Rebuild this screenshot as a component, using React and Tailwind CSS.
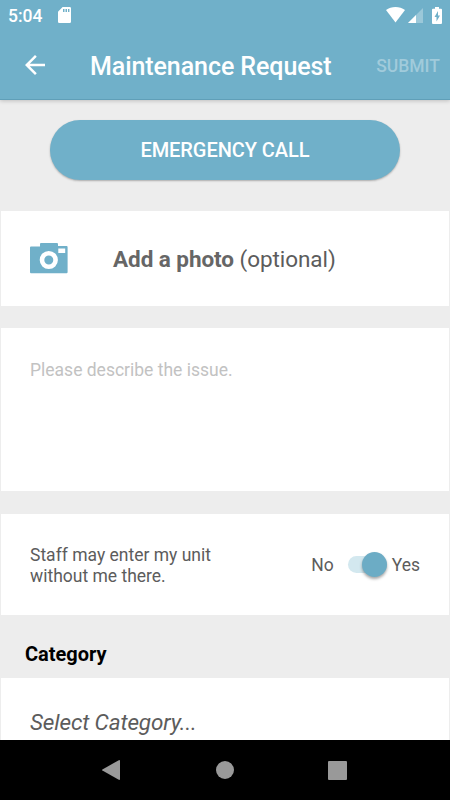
import React, { useState } from "react";

const StatusBar = () => (
  <div className="flex h-[30px] items-center justify-between pl-2 pr-[8px] text-white">
    <div className="flex items-center">
      <span className="w-[50px] pt-[2px] text-[17.5px] font-medium leading-[30px]">5:04</span>
      <svg className="h-4 w-[13px]" viewBox="0 0 13 16">
        <path
          fill="currentColor"
          fillRule="evenodd"
          d="M4.6 0H11.7Q13 0 13 1.3V14.7Q13 16 11.7 16H1.3Q0 16 0 14.7V4.7ZM5 2V5H6.5V2ZM7.5 2V5H9V2ZM10 2V5H11.4V2Z"
        />
      </svg>
    </div>
    <div className="flex items-center">
      <svg className="mr-[3px] h-4 w-[19px]" viewBox="0 0 19 16">
        <path fill="currentColor" d="M0 3.1C5.2-.9 13.8-.9 19 3.1L9.5 15.6Z" />
      </svg>
      <svg className="mr-[9px] h-[15px] w-[15px]" viewBox="0 0 15 15">
        <path fill="currentColor" fillOpacity="0.3" d="M15 0V15H0Z" />
        <path fill="currentColor" d="M8 7V15H0Z" />
      </svg>
      <svg className="h-[17px] w-[10px]" viewBox="0 0 10 17">
        <path
          fill="currentColor"
          fillRule="evenodd"
          d="M3 0H7V1.7H9Q10 1.7 10 2.7V16Q10 17 9 17H1Q0 17 0 16V2.7Q0 1.7 1 1.7H3ZM6 4L2.5 10H4.5V14.5L8 8.5H6Z"
        />
      </svg>
    </div>
  </div>
);

const CameraIcon = () => (
  <svg className="h-[31px] w-[38px]" viewBox="0 0 38 31">
    <path
      fill="#70b0c9"
      d="M10 1Q10 0 11 0H27Q28 0 28 1V3H36.6Q37.6 3 37.6 4V29Q37.6 30.2 36.6 30.2H1Q0 30.2 0 29V4.6Q0 3.6 1 3.6H10Z"
    />
    <circle cx="18.8" cy="17" r="6.8" fill="none" stroke="#fff" strokeWidth="4.6" />
    <path fill="#fff" d="M28.3 5.5H35.2V10H28.3Z" />
  </svg>
);

const App = () => {
  const [description, setDescription] = useState("");
  const [canEnter, setCanEnter] = useState(true);

  return (
    <div className="flex h-[800px] w-[450px] flex-col overflow-hidden bg-[#ededed] font-[Roboto,sans-serif] text-[#5c5c5c]">
      <header className="z-10 h-[100px] shrink-0 border-b border-[#609fb8] bg-[#70b0c9] shadow-[0_1px_4px_rgba(0,0,0,0.2)]">
        <StatusBar />
        <div className="flex h-[70px] items-center pr-[10px] text-white">
          <button className="ml-[25px] mr-[45px]" aria-label="Back">
            <svg className="block h-5 w-5" viewBox="4 4 16 16">
              <path
                fill="currentColor"
                d="M20 11H7.83l5.59-5.59L12 4l-8 8 8 8 1.41-1.41L7.83 13H20v-2z"
              />
            </svg>
          </button>
          <h1 className="flex-1 whitespace-nowrap pt-[3px] text-[25px] font-medium leading-[30px] tracking-[-0.08px]">
            Maintenance Request
          </h1>
          <button className="pt-[2px] text-[17.5px] font-medium text-white/35">SUBMIT</button>
        </div>
      </header>

      <main className="flex min-h-0 flex-1 flex-col overflow-hidden px-px">
        <button className="mx-[49px] mt-[19.5px] h-[60px] shrink-0 rounded-full bg-[#70b0c9] text-[20px] font-medium tracking-[-0.06px] text-white shadow-[0_1px_2px_rgba(0,0,0,0.28)]">
          EMERGENCY CALL
        </button>

        <section className="mt-[31.5px] flex h-[95px] shrink-0 items-center bg-white pl-[29px]">
          <CameraIcon />
          <p className="ml-[45px] whitespace-nowrap text-[22.5px] leading-[28px] tracking-[-0.06px]">
            <b className="font-bold text-[#666]">Add a photo</b> (optional)
          </p>
        </section>

        <textarea
          className="mt-[22px] block h-[163px] shrink-0 resize-none bg-white px-[29px] pt-[32px] text-[17.5px] leading-[21px] outline-none placeholder:text-[#c2c2c2]"
          placeholder="Please describe the issue."
          value={description}
          onChange={(e) => setDescription(e.target.value)}
        />

        <section className="mt-[23px] flex h-[101px] shrink-0 items-center bg-white pl-[29px] pr-[29px] text-[17.5px]">
          <p className="flex-1 pt-[2px] leading-[20.5px]">
            Staff may enter my unit
            <br />
            without me there.
          </p>
          <span className="pt-[2px]">No</span>
          <button
            role="switch"
            aria-checked={canEnter}
            aria-label="Allow entry"
            onClick={() => setCanEnter(!canEnter)}
            className={`ml-[14px] mr-[5px] flex h-[17px] w-[39px] items-center rounded-full bg-[#d3e8ef] ${
              canEnter ? "justify-end" : "justify-start"
            }`}
          >
            <span className="h-[25px] w-[25px] shrink-0 rounded-full bg-[#6cacc5] shadow-[0_2px_3px_rgba(0,0,0,0.35)]" />
          </button>
          <span className="pt-[2px]">Yes</span>
        </section>

        <h2 className="flex h-[63px] shrink-0 items-center pl-6 pt-[14px] text-[20px] font-bold text-black">
          Category
        </h2>
        <section className="h-[100px] shrink-0 bg-white pl-[29px] pt-[30px] text-[22.5px] italic leading-[28px] tracking-[-0.13px]">
          Select Category...
        </section>
      </main>

      <nav className="flex h-[60px] shrink-0 items-center bg-black pl-[102px] text-[#999]">
        <svg className="h-5 w-[18px]" viewBox="0 0 18 20" fill="currentColor">
          <path d="M.4 9.4L16.8.2Q18-.3 18 1V19Q18 20.3 16.8 19.8L.4 10.6Q-.3 10 .4 9.4Z" />
        </svg>
        <span className="ml-24 h-[18px] w-[18px] rounded-full bg-[#999]" />
        <span className="ml-[94px] h-[19px] w-[19px] rounded-[1px] bg-[#999]" />
      </nav>
    </div>
  );
};

export default App;
